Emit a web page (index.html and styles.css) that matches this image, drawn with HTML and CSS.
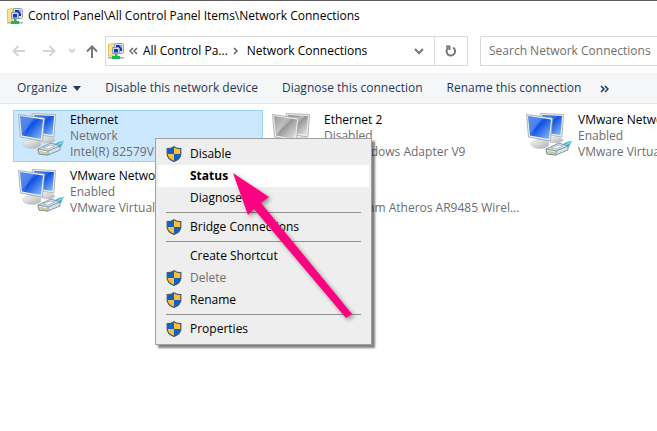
FILE: index.html
```html
<!DOCTYPE html>
<html lang="en">
<head>
<meta charset="utf-8">
<title>Network Connections</title>
<link rel="stylesheet" href="styles.css">
</head>
<body>
<svg class="defs" width="0" height="0" aria-hidden="true">
  <defs>
    <linearGradient id="blue" x1="0" y1="0" x2="1" y2="1">
      <stop offset="0" stop-color="#3f7ae2"/><stop offset=".4" stop-color="#2469ee"/><stop offset=".44" stop-color="#0f4fe0"/><stop offset="1" stop-color="#8cc4ff"/>
    </linearGradient>
    <linearGradient id="grey" x1="0" y1="0" x2="1" y2="1">
      <stop offset="0" stop-color="#8a8a8a"/><stop offset=".42" stop-color="#b8b8b8"/><stop offset=".46" stop-color="#969696"/><stop offset="1" stop-color="#ececec"/>
    </linearGradient>
    <linearGradient id="base" x1="0" y1="0" x2="1" y2="1">
      <stop offset="0" stop-color="#fafafa"/><stop offset="1" stop-color="#a9adb0"/>
    </linearGradient>
    <symbol id="folder" viewBox="0 0 16 16">
      <path d="M0.500 1.500 5 .5 6 2v11H.5z" fill="#fbe48c" stroke="#e2c35c"/>
      <path d="M6.500.5h8l1 1v8l-1 1h-8z" fill="#dfe3e8" stroke="#98a0aa"/>
      <path d="M8 2h6v6H8z" fill="#1230c8"/><path d="M11 2h3v4z" fill="#86a4f4"/>
      <path d="M4.500 4.500h6l1 1v5h-7z" fill="#d5dae2" stroke="#8d98a8"/>
      <path d="M6 6h4v3.500H6z" fill="#1636d2"/>
      <path d="M7 11h2.500v2H7zM4 13h8v3H4z" fill="#18b85c"/>
      <path d="M0 14h4v1.500H0zM12 14h4v1.500h-4z" fill="#a5adb3"/>
    </symbol>
    <symbol id="shield" viewBox="0 0 16 16">
      <path d="M8 .7C6 2.200 3.500 2.700 1.200 2.700V8c0 3.600 3 6 6.800 7.400C11.800 14 14.800 11.600 14.800 8V2.700C12.500 2.700 10 2.200 8 .7z" fill="#ffbe35"/>
      <path d="M8 .7C6 2.200 3.500 2.700 1.200 2.700V8H8zM8 8h6.800c0 3.600-3 6-6.800 7.400z" fill="#0b63c9"/>
      <path d="M8 .7C6 2.200 3.500 2.700 1.200 2.700V8c0 3.600 3 6 6.800 7.400C11.800 14 14.800 11.600 14.800 8V2.700C12.500 2.700 10 2.200 8 .7z" fill="none" stroke="#46586a" stroke-width="1.200"/>
    </symbol>
    <symbol id="screens" viewBox="0 0 48 48">
      <ellipse cx="29" cy="28" rx="8" ry="3" fill="url(#base)" stroke="#c5c8ca" stroke-width=".5"/>
      <path d="M14 1.500 37.500 2.500 36 25 16 22z" fill="#eceeef" stroke="#a4a7a9" stroke-width=".8"/>
      <path class="screen" d="M16 3 36 4 34.500 23 18 20.500z"/>
      <path d="M12 26h7l1 5h-8z" fill="#bfc2c4"/>
      <ellipse cx="14" cy="32" rx="9" ry="4.500" fill="url(#base)" stroke="#c0c3c5" stroke-width=".6"/>
      <path d="M0.500 2.500 26.500 6 24.500 29 2.500 25z" fill="#eceeef" stroke="#a0a3a5" stroke-width=".8"/>
      <path class="screen" d="M2 4 25 7.500 23 27 4 23.500z"/>
      <path d="M2 4 16 6.200C11 11 8 17 6 23.900L4 23.500z" fill="#fff" opacity=".16"/>
    </symbol>
    <symbol id="plug" viewBox="0 0 48 48">
      <path d="M35 33c3-1 5-4 11-4l-3 6-6 3z" fill="#42b9dc"/>
      <path d="M38 34c2-2 4-2 7-4" fill="none" stroke="#a6e8f5"/>
      <path d="M20 37 33 31 42 34v4L30 43l-9-1z" fill="#d6e1ec" stroke="#6f8496" stroke-width=".8"/>
      <path d="M20 37 30 39v4l-9-1zM30 39l12-5" fill="#f0f0d8" stroke="#6f8496" stroke-width=".8"/>
      <path d="M22 39v2M24 39v3M26 40v2M28 40v2" stroke="#a5ae54"/>
      <path d="M25 36l8-3 4 1-7 3z" fill="#f7faff" stroke="#8fa0b2" stroke-width=".6"/>
    </symbol>
  </defs>
</svg>
<div class="window">
  <header class="title">
    <svg class="small-icon" aria-hidden="true"><use href="#folder"/></svg>
    <span>Control Panel\All Control Panel Items\Network Connections</span>
  </header>
  <nav class="navigation">
    <div class="history">
      <button class="off" aria-label="Back"><svg width="14" height="12" viewBox="0 0 14 12"><path d="M13 6H2M6.500 1 1.500 6l5 5"/></svg></button>
      <button class="off" aria-label="Forward"><svg width="14" height="12" viewBox="0 0 14 12"><path d="M1 6h11M7.500 1l5 5-5 5"/></svg></button>
      <button class="off narrow" aria-label="Recent locations"><svg width="8" height="6" viewBox="0 0 8 6"><path d="M1 1l3 3 3-3"/></svg></button>
      <button aria-label="Up"><svg width="14" height="14" viewBox="0 0 14 14"><path d="M7 14V3M2 7.500l5-5 5 5"/></svg></button>
    </div>
    <div class="address">
      <svg class="small-icon" aria-hidden="true"><use href="#folder"/></svg>
      <svg class="line more" width="9" height="8" viewBox="0 0 9 8"><path d="M4 1 1 4l3 3M8 1 5 4l3 3"/></svg>
      <a href="#">All Control Pa...</a>
      <svg class="line step" width="6" height="8" viewBox="0 0 6 8"><path d="M1 1l3 3-3 3"/></svg>
      <a href="#">Network Connections</a>
      <button class="open" aria-label="Previous locations"><svg width="10" height="8" viewBox="0 0 10 8"><path d="M1 2l4 4 4-4"/></svg></button>
      <button class="refresh" aria-label="Refresh"><svg width="12" height="12" viewBox="0 0 12 12"><path d="M8 2.500A4.300 4.300 0 1 1 3 3M1 1.500h3.500V5"/></svg></button>
    </div>
    <input class="search" type="text" aria-label="Search Network Connections" placeholder="Search Network Connections">
  </nav>
  <div class="commands">
    <button>Organize <svg width="8" height="5" viewBox="0 0 8 5"><path d="M0 0h8L4 5z"/></svg></button>
    <button>Disable this network device</button>
    <button>Diagnose this connection</button>
    <button>Rename this connection</button>
    <button class="overflow" aria-label="More commands"><svg width="9" height="8" viewBox="0 0 9 8"><path class="stroke" d="M1 1l3 3-3 3M5 1l3 3-3 3"/></svg></button>
  </div>
  <main class="connections">
    <article class="item selected">
      <svg class="device" aria-hidden="true"><use href="#screens"/><use href="#plug"/></svg>
      <div class="details"><h2>Ethernet</h2><p>Network</p><p>Intel(R) 82579V Gigabit Network C...</p></div>
    </article>
    <article class="item disabled">
      <svg class="device" aria-hidden="true"><use href="#screens"/></svg>
      <div class="details"><h2>Ethernet 2</h2><p>Disabled</p><p>TAP-Windows Adapter V9</p></div>
    </article>
    <article class="item">
      <svg class="device" aria-hidden="true"><use href="#screens"/><use href="#plug"/></svg>
      <div class="details"><h2>VMware Network Adapter</h2><p>Enabled</p><p>VMware Virtual Ethernet</p></div>
    </article>
    <article class="item">
      <svg class="device" aria-hidden="true"><use href="#screens"/><use href="#plug"/></svg>
      <div class="details"><h2>VMware Network Adapter</h2><p>Enabled</p><p>VMware Virtual Ethernet</p></div>
    </article>
    <article class="item last">
      <div class="details"><p>Qualcomm Atheros AR9485 Wirel...</p></div>
    </article>
    <div class="menu" role="menu">
      <button role="menuitem"><svg aria-hidden="true"><use href="#shield"/></svg>Disable</button>
      <button role="menuitem" class="current">Status</button>
      <button role="menuitem">Diagnose</button>
      <hr>
      <button role="menuitem"><svg aria-hidden="true"><use href="#shield"/></svg>Bridge Connections</button>
      <hr>
      <button role="menuitem">Create Shortcut</button>
      <button role="menuitem" disabled><svg aria-hidden="true"><use href="#shield"/></svg>Delete</button>
      <button role="menuitem"><svg aria-hidden="true"><use href="#shield"/></svg>Rename</button>
      <hr>
      <button role="menuitem"><svg aria-hidden="true"><use href="#shield"/></svg>Properties</button>
    </div>
    <svg class="pointer" width="120" height="146" viewBox="0 0 120 146" aria-hidden="true"><path d="M0 0 36 24 28 30 119 141 113 145 21 36 15 42z"/></svg>
  </main>
</div>
</body>
</html>
```
FILE: styles.css
```css
* { box-sizing: border-box; }
body {
  margin: 0;
  background: #fff;
  color: #000;
  font: 12px/16px "Segoe UI", "Open Sans", "Noto Sans", sans-serif;
}
button {
  margin: 0;
  padding: 0;
  border: 0;
  background: none;
  color: inherit;
  font: inherit;
}
a { color: inherit; text-decoration: none; }
.defs { position: absolute; }
.window {
  min-height: 100vh;
  border-top: 1px solid #5f5d60;
  overflow: hidden;
}
.small-icon { width: 16px; height: 16px; flex: none; }
.title {
  display: flex;
  align-items: center;
  gap: 5px;
  height: 30px;
  padding-left: 7px;
  white-space: nowrap;
}
.navigation {
  display: flex;
  height: 42px;
  padding: 5px 0 7px;
}
.navigation svg path {
  fill: none;
  stroke: #777;
  stroke-width: 2;
}
.history {
  display: flex;
  align-items: center;
  flex: none;
  width: 105px;
  padding-left: 12px;
}
.history button { display: flex; justify-content: center; flex: none; width: 14px; margin-right: 16px; }
.history button:nth-child(2) { margin-right: 12px; }
.history button.narrow { width: 8px; margin-right: 9px; }
.history button:last-child { margin-right: 0; }
.navigation .off path { stroke: #d4d4d4; }
.address {
  display: flex;
  align-items: center;
  flex: none;
  width: 363px;
  padding-left: 2px;
  border: 1px solid #d9d9d9;
  white-space: nowrap;
}
.navigation .line path { stroke: #666; stroke-width: 1.500; }
.more { margin: 0 5px; }
.step { margin: 0 8px 0 5px; }
.open { margin-left: auto; padding: 0 10px; }
.refresh {
  display: flex;
  align-items: center;
  justify-content: center;
  width: 33px;
  height: 28px;
  border-left: 1px solid #d9d9d9;
}
.search {
  flex: 1;
  min-width: 0;
  margin-left: 12px;
  padding: 0 0 0 8px;
  border: 1px solid #d9d9d9;
  border-right: 0;
  background: #fff;
  font: inherit;
}
.search::placeholder { color: #707070; opacity: 1; }
.commands {
  display: flex;
  align-items: center;
  gap: 24px;
  height: 31px;
  padding-left: 17px;
  border-bottom: 1px solid #e6e6e6;
  background: #f5f6f8;
  color: #1e395b;
  white-space: nowrap;
}
.commands svg { margin-left: 3px; vertical-align: middle; fill: #1e395b; }
.commands .overflow { margin-left: -8px; }
.commands .stroke { fill: none; stroke: #1e395b; stroke-width: 1.500; }
.connections {
  position: relative;
  display: grid;
  grid-template-columns: repeat(3, 250px);
  grid-auto-rows: 52px;
  gap: 4px;
  padding: 6px 0 0 13px;
}
.item {
  display: flex;
  gap: 4px;
  padding: 1px 0 1px 4px;
  border: 1px solid transparent;
  white-space: nowrap;
}
.item.selected { border-color: #99d1ff; background: #cce8ff; }
.item.last { padding-left: 56px; align-items: flex-end; }
.device { width: 48px; height: 48px; flex: none; }
.disabled { --screen: url(#grey); }
.screen { fill: var(--screen, url(#blue)); }
.details h2, .details p { margin: 0; font-size: 12px; font-weight: 400; }
.details p { color: #6d6d6d; }
.menu {
  position: absolute;
  top: 34px;
  left: 155px;
  width: 217px;
  padding: 4px 2px;
  border: 1px solid #a0a0a0;
  background: #eee;
  box-shadow: 3px 3px 2px rgba(0, 0, 0, .5);
}
.menu button {
  display: flex;
  align-items: center;
  gap: 8px;
  width: 100%;
  height: 22px;
  padding-left: 32px;
  text-align: left;
}
.menu button:has(svg) { padding-left: 8px; }
.menu svg { width: 16px; height: 16px; }
.menu hr { height: 1px; margin: 3px 8px; border: 0; background: #919191; }
.menu .current { background: #fff; font-weight: 700; }
.menu button:disabled { color: #6d6d6d; }
.pointer {
  position: absolute;
  top: 69px;
  left: 233px;
  overflow: visible;
  fill: #ff0080;
  filter: drop-shadow(2px 2px 2px rgba(0, 0, 0, .4));
}
```
